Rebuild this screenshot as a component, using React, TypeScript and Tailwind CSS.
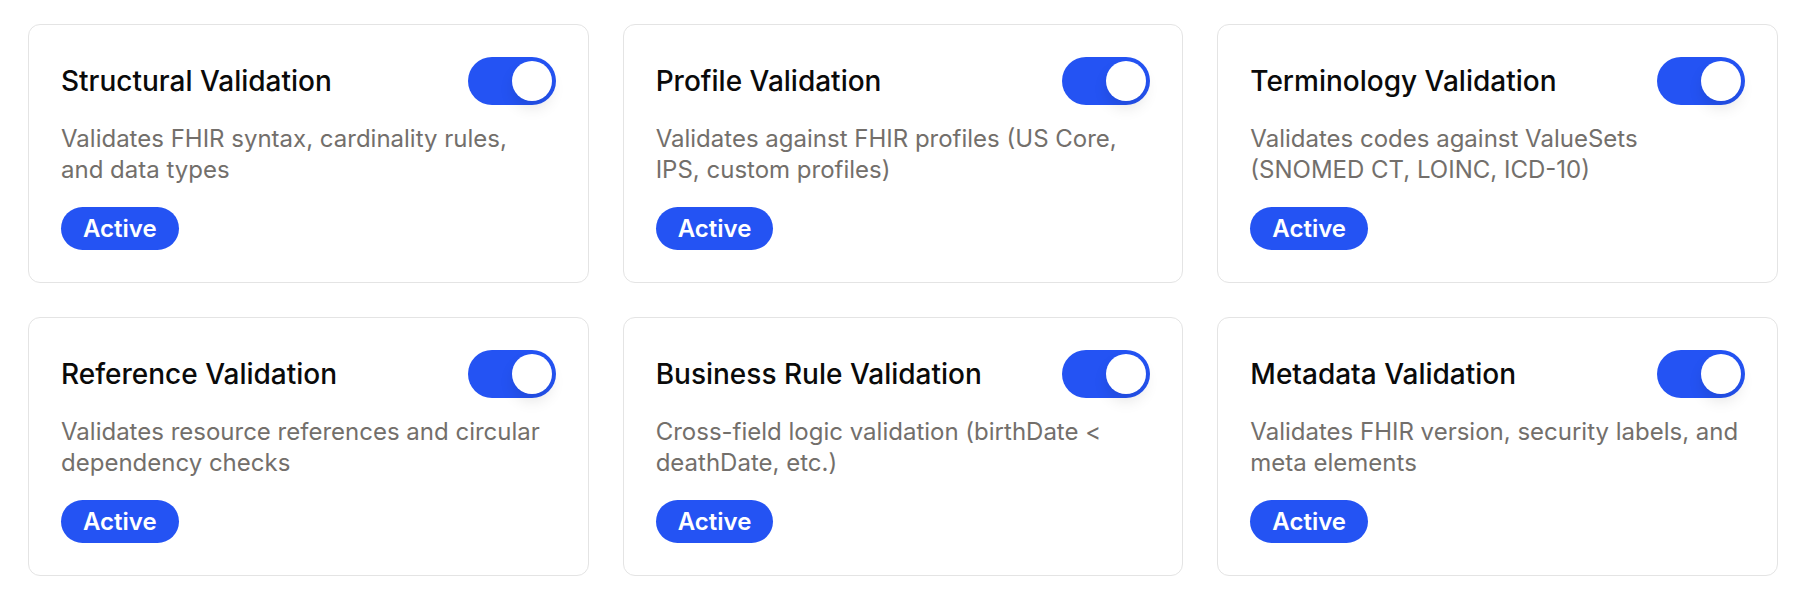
import React, { useState } from 'react';

interface ValidationRule {
  id: string;
  title: string;
  description: string;
}

const rules: ValidationRule[] = [
  {
    id: 'structural',
    title: 'Structural Validation',
    description: 'Validates FHIR syntax, cardinality rules, and data types',
  },
  {
    id: 'profile',
    title: 'Profile Validation',
    description: 'Validates against FHIR profiles (US Core, IPS, custom profiles)',
  },
  {
    id: 'terminology',
    title: 'Terminology Validation',
    description: 'Validates codes against ValueSets (SNOMED CT, LOINC, ICD-10)',
  },
  {
    id: 'reference',
    title: 'Reference Validation',
    description: 'Validates resource references and circular dependency checks',
  },
  {
    id: 'business',
    title: 'Business Rule Validation',
    description: 'Cross-field logic validation (birthDate < deathDate, etc.)',
  },
  {
    id: 'metadata',
    title: 'Metadata Validation',
    description: 'Validates FHIR version, security labels, and meta elements',
  },
];

const Toggle: React.FC<{ checked: boolean; onChange: () => void }> = ({ checked, onChange }) => (
  <button
    type="button"
    role="switch"
    aria-checked={checked}
    onClick={onChange}
    className={`relative flex h-12 w-[88px] shrink-0 items-center rounded-full p-1 transition-colors ${
      checked ? 'justify-end bg-[#2453f3]' : 'justify-start bg-[#d4d4d4]'
    }`}
  >
    <span className="block h-10 w-10 rounded-full bg-white shadow-[0_8px_16px_-2px_rgba(0,0,0,0.12)]" />
  </button>
);

const RuleCard: React.FC<{ rule: ValidationRule }> = ({ rule }) => {
  const [enabled, setEnabled] = useState(true);

  return (
    <div className="rounded-xl border-[1.5px] border-[#e4e4e4] bg-white px-8 pb-8 pt-8">
      {/* Header */}
      <div className="flex items-center justify-between gap-4">
        <h3 className="text-[28px] font-medium leading-8 text-[#0a0a0a]">{rule.title}</h3>
        <Toggle checked={enabled} onChange={() => setEnabled(v => !v)} />
      </div>

      <p className="mt-[18px] pr-[4px] text-[24px] leading-[31px] text-[#736f6b]">{rule.description}</p>

      <div className="mt-[22px] flex">
        <span
          className={`inline-flex h-[43px] items-center rounded-full px-[22px] text-[24px] font-semibold text-white ${
            enabled ? 'bg-[#2453f3]' : 'bg-[#a3a3a3]'
          }`}
        >
          {enabled ? 'Active' : 'Inactive'}
        </span>
      </div>
    </div>
  );
};

export default function App() {
  return (
    <div
      className="min-h-[608px] bg-white px-7 pt-6"
      style={{ fontFamily: 'Inter, "Noto Sans", sans-serif' }}
    >
      <div className="grid grid-cols-3 gap-[34px]">
        {rules.map(rule => (
          <RuleCard key={rule.id} rule={rule} />
        ))}
      </div>
    </div>
  );
}
